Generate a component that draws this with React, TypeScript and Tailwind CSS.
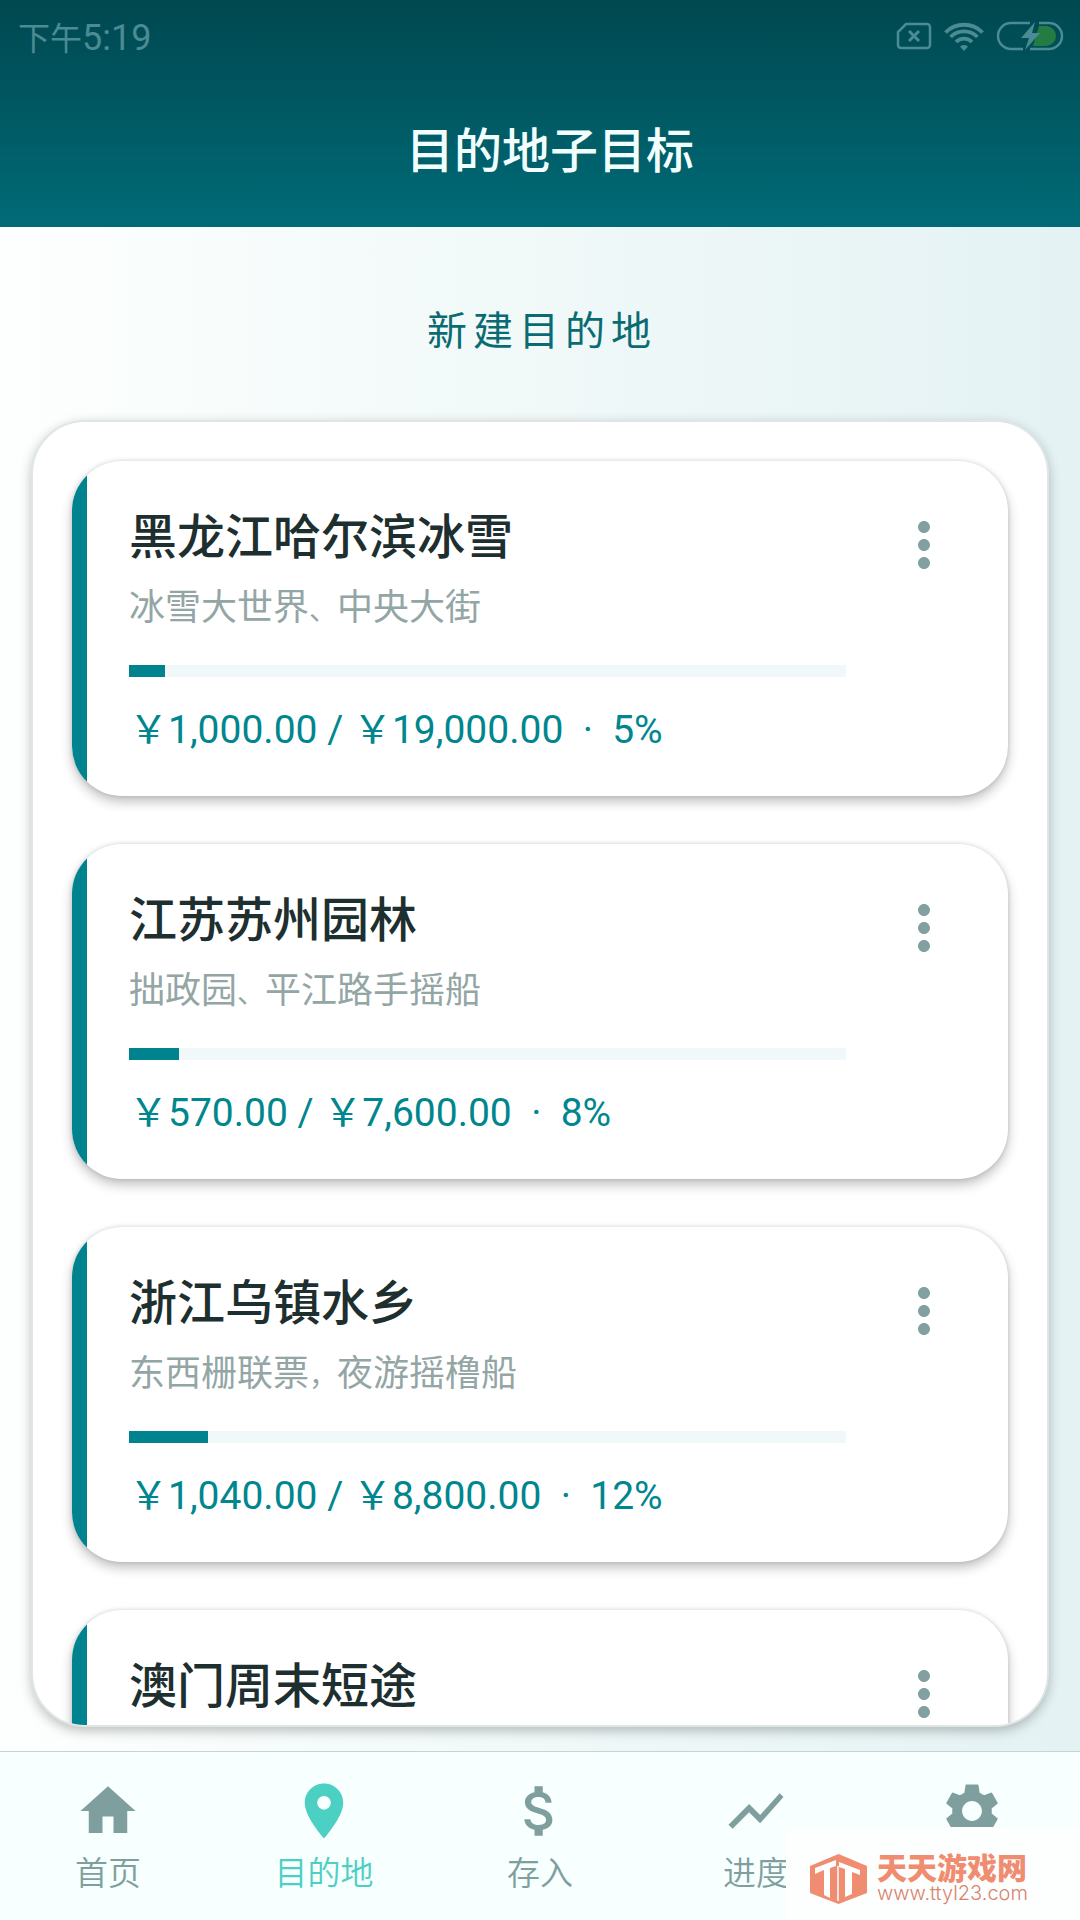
import { ReactNode } from 'react';
import {
  MdAttachMoney,
  MdHome,
  MdMoreVert,
  MdPlace,
  MdSettings,
  MdShowChart,
} from 'react-icons/md';

type Details = {
  places: [string, string];
  separator: string;
  saved: string;
  target: string;
  progress: number;
  percent: string;
};

type Destination = {
  title: string;
  details?: Details;
};

const destinations: Destination[] = [
  {
    title: '黑龙江哈尔滨冰雪',
    details: {
      places: ['冰雪大世界', '中央大街'],
      separator: '、',
      saved: '1,000.00',
      target: '19,000.00',
      progress: 5,
      percent: '5%',
    },
  },
  {
    title: '江苏苏州园林',
    details: {
      places: ['拙政园', '平江路手摇船'],
      separator: '、',
      saved: '570.00',
      target: '7,600.00',
      progress: 7,
      percent: '8%',
    },
  },
  {
    title: '浙江乌镇水乡',
    details: {
      places: ['东西栅联票', '夜游摇橹船'],
      separator: '，',
      saved: '1,040.00',
      target: '8,800.00',
      progress: 11,
      percent: '12%',
    },
  },
  { title: '澳门周末短途' },
];

const StatusBar = () => (
  <div className="flex h-18 items-center justify-between pr-4 pl-[18px] text-[#4b8b93]">
    <p className="flex items-baseline pt-1 text-[32px] leading-10">
      下午<span className="text-[36px]">5:19</span>
    </p>
    <div className="flex items-center gap-3">
      <svg className="h-7 w-9" viewBox="0 0 36 28" fill="none" stroke="currentColor">
        <path
          d="M10 2h21a3 3 0 0 1 3 3v18a3 3 0 0 1-3 3H5a3 3 0 0 1-3-3V10z"
          strokeWidth="2.5"
        />
        <path d="M13 9l10 10M23 9l-10 10" strokeWidth="3" />
      </svg>
      <svg className="h-7.5 w-10" viewBox="0 0 40 30" fill="none" stroke="currentColor">
        <path
          d="M1.500 11.500a26 26 0 0 1 37 0M6.600 16a19 19 0 0 1 26.800 0M12 21a11.400 11.400 0 0 1 16 0"
          strokeWidth="3.8"
        />
        <path d="M20 30l-4-4.500a6 6 0 0 1 8 0z" fill="currentColor" stroke="none" />
      </svg>
      <svg className="h-7.5 w-17" viewBox="0 0 68 30" fill="none">
        <path d="M43 5h7a10 10 0 0 1 0 20H37z" fill="#257c42" />
        <path
          d="M34 2H15a13 13 0 0 0 0 26h12M43 2h10a13 13 0 0 1 0 26H34"
          stroke="currentColor"
          strokeWidth="2.5"
        />
        <path d="M39 1L25 17h8l-4 12 15-17h-8z" fill="currentColor" />
      </svg>
    </div>
  </div>
);

const DestinationDetails = ({ title, details }: { title: string; details: Details }) => (
  <>
    <p className="mt-3.5 text-[36px] leading-[56px] text-[#93a6a5]">
      {details.places[0]}
      <span className="text-[28px] leading-none">{details.separator}</span>
      {details.places[1]}
    </p>
    <div
      className="mt-[29px] h-3 bg-[#f0f8f9]"
      role="progressbar"
      aria-label={title}
      aria-valuenow={details.progress}
    >
      <div className="h-full bg-[#00838f]" style={{ width: `${details.progress}%` }} />
    </div>
    <p className="mt-[25px] text-[39px] leading-[56px] whitespace-pre text-[#00868f]">
      {`￥${details.saved} / ￥${details.target}  ·  ${details.percent}`}
    </p>
  </>
);

const DestinationCard = ({ title, details }: Destination) => (
  <li className="flex min-h-[335px] shrink-0 overflow-hidden rounded-[50px] bg-white shadow-[0_6px_12px_rgba(0,0,0,0.24),0_0_4px_rgba(0,0,0,0.14)]">
    <div className="w-[15px] bg-[#00838f]" />
    <div className="min-w-0 grow pt-[49px] pb-[38px] pl-[42px]">
      <h2 className="text-[48px] leading-[56px] font-medium text-[#1e2f2f]">{title}</h2>
      {details && <DestinationDetails title={title} details={details} />}
    </div>
    <button
      type="button"
      aria-label="更多"
      className="mt-12 mr-12 ml-[42px] self-start text-[#82a09f]"
    >
      <MdMoreVert className="size-18" />
    </button>
  </li>
);

type NavItemProps = {
  icon: ReactNode;
  name: string;
  label?: string;
  active?: boolean;
};

const NavItem = ({ icon, name, label, active }: NavItemProps) => (
  <a
    href="#"
    aria-label={name}
    className={
      active
        ? 'flex flex-1 flex-col items-center gap-1.5 pt-[26px] text-[#4dd0c4]'
        : 'flex flex-1 flex-col items-center gap-1.5 pt-[26px] text-[#7f9f9f]'
    }
  >
    {icon}
    {label && <span className="text-[33px] leading-[48px] font-[350]">{label}</span>}
  </a>
);

const SiteBadge = () => (
  <div className="absolute right-0 bottom-0 flex h-[93px] w-[294px] items-center gap-2.5 bg-[#fdffff] pt-2.5 pl-6 text-[#f08c70]">
    <svg className="h-[50px] w-[57px]" viewBox="0 0 57 50">
      <path d="M28.500 0L57 12v27L28.500 50 0 39V12z" fill="currentColor" />
      <path
        d="M5 14l21-8v6l-6 2v30l-6-3V16l-9 4zM29 8l21 8v5l-8-3v22l-7 3V15l-6-2z"
        fill="#fdffff"
      />
      <path d="M28 12v35" stroke="#fdffff" strokeWidth="1.5" />
    </svg>
    <div>
      <p className="text-[30px] leading-7 font-black">天天游戏网</p>
      <p className="font-[Inter,sans-serif] text-[20px] leading-5 font-light text-[#d9826c]">
        www.ttyl23.com
      </p>
    </div>
  </div>
);

export default function App() {
  return (
    <div className="flex h-screen flex-col bg-linear-to-r from-[#fdfffe] to-[#e4f2f3] font-[Roboto,'Noto_Sans_CJK_SC',sans-serif]">
      <header className="bg-linear-to-b from-[#004850] to-[#006b77] pb-11">
        <StatusBar />
        <h1 className="mt-12 pl-5 text-center text-[48px] leading-[63px] font-medium text-[#f2ffff]">
          目的地子目标
        </h1>
      </header>
      <main className="flex min-h-0 grow flex-col px-[31px] pb-6">
        <button
          type="button"
          className="mt-[77px] mb-[60px] self-center pl-1 text-[40px] leading-[56px] tracking-[6px] text-[#0b6b72]"
        >
          新建目的地
        </button>
        <ul className="flex min-h-0 grow flex-col gap-12 overflow-hidden rounded-[54px] border-2 border-[#e0e6e6] bg-white px-[39px] pt-[39px] shadow-[0_4px_12px_rgba(0,0,0,0.25)]">
          {destinations.map((item) => (
            <DestinationCard key={item.title} {...item} />
          ))}
        </ul>
      </main>
      <nav className="relative flex h-[169px] shrink-0 border-t border-[#c5d3d5] bg-[#f7ffff]">
        <NavItem icon={<MdHome className="size-[66px]" />} name="首页" label="首页" />
        <NavItem icon={<MdPlace className="size-[66px]" />} name="目的地" label="目的地" active />
        <NavItem icon={<MdAttachMoney className="size-[66px]" />} name="存入" label="存入" />
        <NavItem icon={<MdShowChart className="size-[66px]" />} name="进度" label="进度" />
        <NavItem icon={<MdSettings className="size-[66px]" />} name="设置" />
        <SiteBadge />
      </nav>
    </div>
  );
}
